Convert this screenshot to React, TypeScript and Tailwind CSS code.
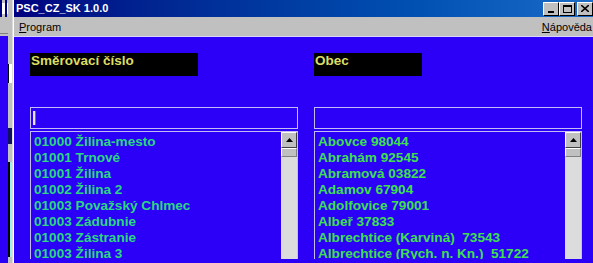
import React from 'react';

const zipRows = [
  '01000 Žilina-mesto',
  '01001 Trnové',
  '01001 Žilina',
  '01002 Žilina 2',
  '01003 Považský Chlmec',
  '01003 Zádubnie',
  '01003 Zástranie',
  '01003 Žilina 3',
];

const townRows = [
  'Abovce 98044',
  'Abrahám 92545',
  'Abramová 03822',
  'Adamov 67904',
  'Adolfovice 79001',
  'Albeř 37833',
  'Albrechtice (Karviná)  73543',
  'Albrechtice (Rych. n. Kn.)  51722',
];

function TitleButton({ kind }: { kind: 'min' | 'max' | 'close' }) {
  return (
    <div className="w-[16px] h-[14px] bg-[#c0c0c0] border-t border-l border-t-white border-l-white border-r border-b border-r-black border-b-black flex items-center justify-center">
      {kind === 'min' && <div className="w-[6px] h-[2px] bg-black mt-[6px] -ml-[1px]" />}
      {kind === 'max' && <div className="w-[9px] h-[8px] border border-black border-t-2" />}
      {kind === 'close' && (
        <svg width="8" height="7" viewBox="0 0 8 7">
          <path d="M0 0 L8 7 M8 0 L0 7" stroke="black" strokeWidth="1.6" />
        </svg>
      )}
    </div>
  );
}

function ScrollBar() {
  return (
    <div className="w-[16px] flex flex-col bg-[#dcdcdc]">
      <div className="h-[16px] bg-[#c0c0c0] border-t border-l border-t-white border-l-white border-r border-b border-r-[#404040] border-b-[#404040] flex items-center justify-center">
        <svg width="7" height="4" viewBox="0 0 7 4">
          <path d="M3.5 0 L7 4 L0 4 Z" fill="black" />
        </svg>
      </div>
      <div className="h-[9px] bg-[#c0c0c0] border-t border-l border-t-white border-l-white border-r border-b border-r-[#808080] border-b-[#808080]" />
    </div>
  );
}

function Column({ label, labelWidth, rows, color, cursor }: { label: string; labelWidth: string; rows: string[]; color: string; cursor?: boolean }) {
  return (
    <div className="w-[268px] flex flex-col">
      <div className={`${labelWidth} h-[23px] bg-black text-[#dcdc64] font-bold text-[13.5px] leading-[16px] pl-[1px]`}>
        {label}
      </div>
      <div className="mt-[31px] h-[22px] border border-[#c4bcf4] flex items-center pl-[2px]">
        {cursor && <div className="w-[3px] h-[14px] bg-[#e4e4e4] border-r border-[#707070]" />}
      </div>
      <div className="mt-[2px] h-[128px] border-t border-l border-r border-[#c4bcf4] flex overflow-hidden">
        <div className={`flex-1 pl-[3px] pt-[2px] font-bold text-[13.6px] leading-[16px] ${color}`}>
          {rows.map((r) => (
            <div key={r} className="whitespace-pre">{r}</div>
          ))}
        </div>
        <ScrollBar />
      </div>
    </div>
  );
}

export default function App() {
  return (
    <div className="w-[593px] h-[263px] overflow-hidden flex bg-[#c0c0c0]" style={{ fontFamily: '"Liberation Sans", Arial, sans-serif' }}>
      {/* background window peeking on the left */}
      <div className="w-[12px] flex flex-col">
        <div className="h-[17px] flex bg-[#c0c0c0]">
          <div className="w-[2px] bg-[#000080]" />
          <div className="w-[3px] bg-white my-[3px]" />
          <div className="w-[2px] bg-[#000080]" />
          <div className="w-[1px] bg-white my-[3px]" />
        </div>
        <div className="h-[19px] bg-[#c0c0c0] flex flex-col justify-end">
          <div className="h-[1px] w-[8px] bg-[#808080] mb-[2px]" />
        </div>
        <div className="flex-1 flex">
          <div className="w-[8px] bg-[#2c00f6]" />
          <div className="w-[4px] bg-[#c0c0c0] flex flex-col">
            <div className="h-[28px]" />
            <div className="h-[19px] border-l border-black bg-white" />
            <div className="h-[45px]" />
            <div className="h-[16px] bg-[#101060]" />
            <div className="h-[18px]" />
            <div className="flex-1 border-l-2 border-black bg-[#a0f0f0] mb-[6px]" />
          </div>
        </div>
      </div>

      {/* main window */}
      <div className="flex-1 flex flex-col border-l border-[#dcdcdc]">
        <div className="flex-1 flex flex-col border-l border-white">
          <div className="h-[17px] flex items-center bg-gradient-to-r from-[#000080] to-[#1a6cc8] pl-[2px] pr-0">
            <span className="text-white font-bold text-[11px] leading-none flex-1">PSC_CZ_SK 1.0.0</span>
            <div className="flex items-center">
              <TitleButton kind="min" />
              <TitleButton kind="max" />
              <div className="w-[2px]" />
              <TitleButton kind="close" />
            </div>
          </div>
          <div className="h-[1px] bg-[#c0c0c0]" />
          <div className="h-[18px] bg-[#c0c0c0] flex items-center text-[11px] text-black px-[5px]">
            <span className="flex-1"><span className="underline">P</span>rogram</span>
            <span className="mr-[-4px]"><span className="underline">N</span>ápověda</span>
          </div>
          <div className="h-[222px] bg-[#2c00f6] border-t border-[#d8d4ff] flex pl-[16px] pt-[16px] gap-[16px] box-content">
            <Column label="Směrovací číslo" labelWidth="w-[168px]" rows={zipRows} color="text-[#2ad882]" cursor />
            <Column label="Obec" labelWidth="w-[108px]" rows={townRows} color="text-[#3ee04e]" />
          </div>
          <div className="h-[1px] bg-[#a8a8a8]" />
          <div className="h-[1px] bg-[#303030]" />
          <div className="flex-1 bg-[#d0d0d0]" />
        </div>
      </div>
    </div>
  );
}
